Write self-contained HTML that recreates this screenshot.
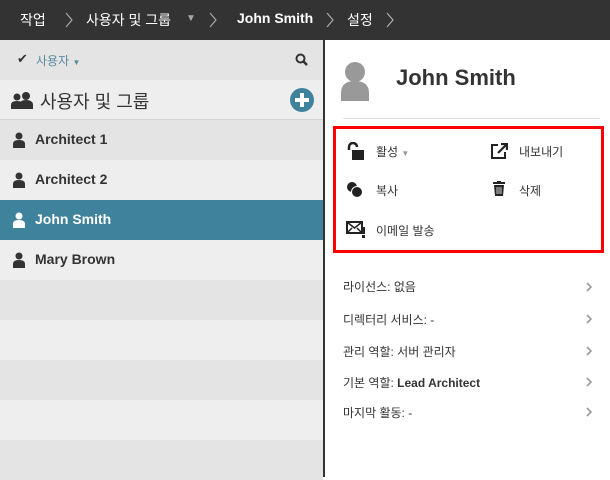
<!DOCTYPE html>
<html><head><meta charset="utf-8"><style>
*{margin:0;padding:0;box-sizing:border-box}
body{width:610px;height:477px;overflow:hidden;font-family:"Liberation Sans","Noto Sans CJK KR",sans-serif;background:#fff;position:relative;color:#333}
.hdr{position:absolute;left:0;top:0;width:610px;height:40px;background:#333;color:#fff;font-size:14px}
.hdr span{position:absolute;top:10px}
.hdr svg{position:absolute;top:12px}
.left{position:absolute;left:0;top:40px;width:323px;height:437px;background:#eee}
.div{position:absolute;left:323px;top:40px;width:2px;height:437px;background:#333}
.row{position:absolute;left:0;width:323px;height:40px}
.a{background:#e4e4e4}.b{background:#eee}
.uname{position:absolute;left:35px;top:11px;font-weight:bold;font-size:14px;color:#333}
.ui{position:absolute;left:13px;top:12px}
.abs{position:absolute}
.info{position:absolute;left:343px;font-size:12px;color:#333}
.ic{position:absolute;left:586px}
</style></head><body>
<div class="hdr">
<span style="left:20px">작업</span><svg style="left:65px" width="8" height="16"><path d="M1 1l6 7-6 7" fill="none" stroke="#aaa" stroke-width="1.2"/></svg>
<span style="left:86px">사용자 및 그룹</span><span style="left:186px;font-size:10px;top:13px;color:#aaa">▼</span>
<svg style="left:180px;top:14px;display:none" width="1" height="1"></svg>
<svg style="left:180px;top:15px" width="0" height="0"></svg>
<svg style="left:180px;top:15px" width="0" height="0"></svg>
<svg style="left:180px;top:15px" width="0" height="0"></svg>
<svg style="left:180px;top:15px" width="0" height="0"></svg>
<svg style="left:180px;top:15px" width="0" height="0"></svg>
<svg style="left:180px;top:15px" width="0" height="0"></svg>
<svg style="left:180px;top:15px" width="0" height="0"></svg>
<svg style="left:180px;top:15px" width="0" height="0"></svg>
<svg style="left:180px;top:15px" width="0" height="0"></svg>
<svg style="left:180px;top:15px" width="0" height="0"></svg>
<svg style="left:180px;top:15px" width="0" height="0"></svg>
<svg style="left:180px;top:15px" width="0" height="0"></svg>
<svg style="left:180px;top:15px" width="0" height="0"></svg>
<svg style="left:180px;top:15px" width="0" height="0"></svg>
<svg style="left:180px;top:15px" width="0" height="0"></svg>
<svg style="left:180px;top:15px" width="0" height="0"></svg>
<svg style="left:180px;top:15px" width="0" height="0"></svg>
<svg style="left:180px;top:15px" width="0" height="0"></svg>
<svg style="left:209px" width="8" height="16"><path d="M1 1l6 7-6 7" fill="none" stroke="#aaa" stroke-width="1.2"/></svg>
<span style="left:237px;font-weight:bold">John Smith</span><svg style="left:326px" width="8" height="16"><path d="M1 1l6 7-6 7" fill="none" stroke="#aaa" stroke-width="1.2"/></svg>
<span style="left:347px">설정</span><svg style="left:386px" width="8" height="16"><path d="M1 1l6 7-6 7" fill="none" stroke="#aaa" stroke-width="1.2"/></svg>
</div>
<div class="left">
<div class="row a" style="top:0"><span class="abs" style="left:17px;top:11px;font-size:13px">✔</span><span class="abs" style="left:36px;top:12px;font-size:12px;color:#5a8aa0">사용자 <span style="font-size:8px;color:#5a8aa0">▼</span></span>
<svg class="abs" style="left:295px;top:13px" width="14" height="14" viewBox="0 0 14 14"><circle cx="5.5" cy="5.5" r="4" fill="none" stroke="#333" stroke-width="2"/><path d="M8.5 8.5L12 12" stroke="#333" stroke-width="2.5"/></svg></div>
<div class="row b" style="top:40px;border-bottom:1px solid #d4d4d4"><svg class="abs" style="left:10px;top:12px" width="24" height="18" viewBox="0 0 24 18"><circle cx="7" cy="5" r="3.5" fill="#333"/><path d="M1 17v-4q0-4 6-4t6 4v4z" fill="#333"/><circle cx="16" cy="4" r="4" fill="#333"/><path d="M10 17v-5q0-4 6-4t7 4v5z" fill="#333"/></svg>
<span class="abs" style="left:40px;top:8px;font-size:18px;color:#333">사용자 및 그룹</span>
<svg class="abs" style="left:290px;top:8px" width="24" height="24"><circle cx="12" cy="12" r="12" fill="#3f829c"/><path d="M12 5v14M5 12h14" stroke="#fff" stroke-width="4"/></svg></div>
<div class="row a" style="top:80px"><svg class="ui" width="12" height="16" viewBox="0 0 12 16"><circle cx="6" cy="4" r="3.5" fill="#333"/><path d="M0 16v-4q0-4 6-4t6 4v4z" fill="#333"/></svg><span class="uname">Architect 1</span></div>
<div class="row b" style="top:120px"><svg class="ui" width="12" height="16" viewBox="0 0 12 16"><circle cx="6" cy="4" r="3.5" fill="#333"/><path d="M0 16v-4q0-4 6-4t6 4v4z" fill="#333"/></svg><span class="uname">Architect 2</span></div>
<div class="row" style="top:160px;background:#3f829c"><svg class="ui" width="12" height="16" viewBox="0 0 12 16"><circle cx="6" cy="4" r="3.5" fill="#fff"/><path d="M0 16v-4q0-4 6-4t6 4v4z" fill="#fff"/></svg><span class="uname" style="color:#fff">John Smith</span></div>
<div class="row b" style="top:200px"><svg class="ui" width="12" height="16" viewBox="0 0 12 16"><circle cx="6" cy="4" r="3.5" fill="#333"/><path d="M0 16v-4q0-4 6-4t6 4v4z" fill="#333"/></svg><span class="uname">Mary Brown</span></div>
<div class="row a" style="top:240px"></div><div class="row b" style="top:280px"></div><div class="row a" style="top:320px"></div><div class="row b" style="top:360px"></div><div class="row a" style="top:400px"></div>
</div>
<div class="div"></div>
<svg class="abs" style="left:340px;top:61px" width="30" height="40" viewBox="0 0 30 40"><circle cx="15" cy="11" r="10" fill="#999"/><path d="M1 40v-8q0-12 14-12t14 12v8z" fill="#999"/></svg>
<div class="abs" style="left:396px;top:65px;font-size:22px;font-weight:bold;color:#333">John Smith</div>
<div class="abs" style="left:343px;top:118px;width:257px;height:1px;background:#ddd"></div>
<div class="abs" style="left:333px;top:126px;width:271px;height:127px;border:3px solid #f00"></div>
<svg class="abs" style="left:346px;top:142px" width="20" height="18" viewBox="0 0 20 18"><path d="M3 8V5a4 4 0 0 1 8 0" fill="none" stroke="#222" stroke-width="2.5"/><rect x="6" y="8" width="12" height="10" fill="#222"/></svg>
<span class="abs" style="left:376px;top:143px;font-size:12px">활성 <span style="font-size:8px;color:#999">▼</span></span>
<svg class="abs" style="left:491px;top:143px" width="17" height="16" viewBox="0 0 17 16"><path d="M7 2H1v13h13V9" fill="none" stroke="#222" stroke-width="2"/><path d="M7 10L15 2M10 1h6v6" fill="none" stroke="#222" stroke-width="2.2"/></svg>
<span class="abs" style="left:519px;top:143px;font-size:12px">내보내기</span>
<svg class="abs" style="left:346px;top:181px" width="18" height="18"><circle cx="6" cy="6" r="5" fill="#222"/><circle cx="11" cy="11" r="5.5" fill="#222" stroke="#fff" stroke-width="1"/></svg>
<span class="abs" style="left:376px;top:182px;font-size:12px">복사</span>
<svg class="abs" style="left:493px;top:181px" width="12" height="15" viewBox="0 0 12 15"><rect x="0" y="1" width="12" height="2" fill="#222"/><rect x="4" y="0" width="4" height="2" fill="#222"/><path d="M1 4h10l-1 11H2z" fill="#222"/><path d="M4 6v7M6 6v7M8 6v7" stroke="#fff" stroke-width=".8"/></svg>
<span class="abs" style="left:519px;top:182px;font-size:12px">삭제</span>
<svg class="abs" style="left:346px;top:221px" width="19" height="17" viewBox="0 0 19 17"><rect x="1" y="1" width="15" height="11" fill="none" stroke="#222" stroke-width="2"/><path d="M1 1l7.5 6 7.5-6M1 12l5-5M16 12l-5-5" fill="none" stroke="#222" stroke-width="1.5"/><rect x="16" y="6" width="3" height="7" fill="#222"/><rect x="16" y="14" width="3" height="3" fill="#222"/></svg>
<span class="abs" style="left:376px;top:222px;font-size:12px">이메일 발송</span>
<div class="info" style="top:278px">라이선스: 없음</div><svg class="ic" style="top:282px" width="6" height="10"><path d="M1 1l4 4-4 4" fill="none" stroke="#999" stroke-width="1.6"/></svg>
<div class="info" style="top:311px">디렉터리 서비스: -</div><svg class="ic" style="top:314px" width="6" height="10"><path d="M1 1l4 4-4 4" fill="none" stroke="#999" stroke-width="1.6"/></svg>
<div class="info" style="top:343px">관리 역할: 서버 관리자</div><svg class="ic" style="top:346px" width="6" height="10"><path d="M1 1l4 4-4 4" fill="none" stroke="#999" stroke-width="1.6"/></svg>
<div class="info" style="top:374px">기본 역할: <b>Lead Architect</b></div><svg class="ic" style="top:377px" width="6" height="10"><path d="M1 1l4 4-4 4" fill="none" stroke="#999" stroke-width="1.6"/></svg>
<div class="info" style="top:404px">마지막 활동: -</div><svg class="ic" style="top:407px" width="6" height="10"><path d="M1 1l4 4-4 4" fill="none" stroke="#999" stroke-width="1.6"/></svg>
</body></html>
